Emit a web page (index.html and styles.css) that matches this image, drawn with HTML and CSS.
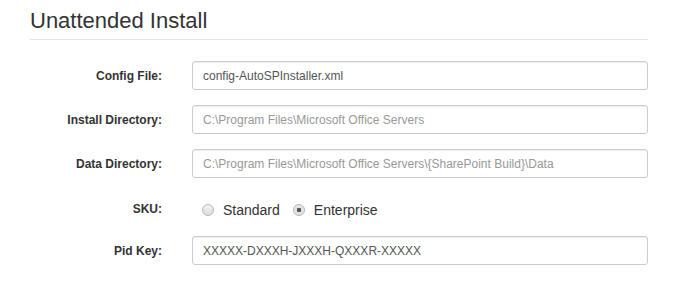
FILE: index.html
```html
<!DOCTYPE html>
<html lang="en">
<head>
  <meta charset="UTF-8">
  <title>Unattended Install</title>
  <link rel="stylesheet" href="styles.css">
</head>
<body>
  <div class="panel">
    <h3 class="section-title">Unattended Install</h3>
    <form class="install-form">
      <label class="form-label" for="configFile">Config File:</label>
      <input id="configFile" class="form-input" type="text" value="config-AutoSPInstaller.xml">

      <label class="form-label" for="installDir">Install Directory:</label>
      <input id="installDir" class="form-input" type="text" placeholder="C:\Program Files\Microsoft Office Servers">

      <label class="form-label" for="dataDir">Data Directory:</label>
      <input id="dataDir" class="form-input" type="text" placeholder="C:\Program Files\Microsoft Office Servers\{SharePoint Build}\Data">

      <span class="form-label sku-label">SKU:</span>
      <div class="radio-group">
        <label class="radio-option"><input type="radio" name="sku" value="standard"> Standard</label>
        <label class="radio-option"><input type="radio" name="sku" value="enterprise" checked> Enterprise</label>
      </div>

      <label class="form-label" for="pidKey">Pid Key:</label>
      <input id="pidKey" class="form-input" type="text" value="XXXXX-DXXXH-JXXXH-QXXXR-XXXXX">
    </form>
  </div>
</body>
</html>
```

FILE: styles.css
```css
body {
  margin: 0;
  padding: 0;
  font-family: "Liberation Sans", Arial, sans-serif;
  font-size: 12px;
  color: #333;
  background-color: #fff;
}

.panel {
  width: 618px;
  padding: 8px 0 0 30px;
}

.section-title {
  margin: 0;
  padding-bottom: 5px;
  font-size: 22px;
  font-weight: normal;
  color: #333;
  border-bottom: 1px solid #e5e5e5;
}

.install-form {
  display: grid;
  grid-template-columns: 132px 1fr;
  column-gap: 30px;
  row-gap: 15px;
  align-items: center;
  margin-top: 21px;
}

.form-label {
  text-align: right;
  font-weight: bold;
  font-size: 12px;
  color: #333;
}

.sku-label {
  padding-top: 4px;
}

.form-input {
  box-sizing: border-box;
  width: 100%;
  height: 29px;
  padding: 0 10px;
  font-family: "Liberation Sans", Arial, sans-serif;
  font-size: 12px;
  color: #555;
  background-color: #fff;
  border: 1px solid #ccc;
  border-radius: 3px;
  box-shadow: inset 0 1px 1px rgba(0, 0, 0, 0.075);
}

.form-input::placeholder {
  color: #999;
}

.radio-group {
  display: flex;
  align-items: center;
  gap: 13px;
  height: 22px;
  padding: 6px 0 0 10px;
  font-size: 14px;
  color: #333;
}

.radio-option {
  display: flex;
  align-items: center;
  gap: 9px;
}

.radio-option input {
  appearance: none;
  box-sizing: border-box;
  margin: 0;
  width: 12px;
  height: 12px;
  border: 1px solid #b5b5b5;
  border-radius: 50%;
  background: linear-gradient(#f2f2f2, #dcdcdc);
}

.radio-option input:checked {
  background: radial-gradient(circle, #555 0, #555 2px, #dedede 2.5px, #f0f0f0 100%);
}
```
